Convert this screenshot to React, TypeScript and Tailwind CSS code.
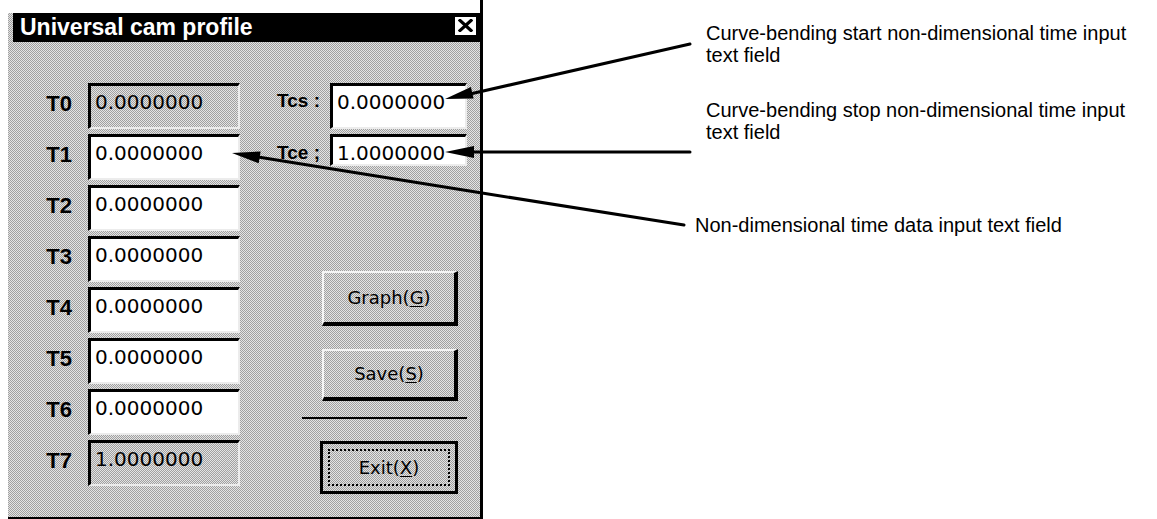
import React from "react";

const dither =
  "bg-[repeating-conic-gradient(#a0a0a0_0_25%,#e4e4e4_0_50%)] bg-[length:2px_2px]";

function Field({ value, gray, w, h }: { value: string; gray?: boolean; w: string; h: string }) {
  return (
    <div
      className={`${w} ${h} border-t-[3px] border-l-[3px] border-t-black border-l-black border-r-2 border-b-2 border-r-[#ececec] border-b-[#ececec] pl-[4px] pt-[4px] font-['DejaVu_Sans',sans-serif] text-[20px] leading-[24px] text-black ${
        gray ? dither : "bg-white"
      }`}
    >
      {value}
    </div>
  );
}

const rows: [string, string, boolean][] = [
  ["T0", "0.0000000", true],
  ["T1", "0.0000000", false],
  ["T2", "0.0000000", false],
  ["T3", "0.0000000", false],
  ["T4", "0.0000000", false],
  ["T5", "0.0000000", false],
  ["T6", "0.0000000", false],
  ["T7", "1.0000000", true],
];

export default function App() {
  return (
    <div className="relative flex h-[519px] w-[1157px] overflow-hidden bg-white font-['Liberation_Sans',Arial,sans-serif] text-black">
      {/* Dialog */}
      <div className="ml-2 flex h-full w-[475px] flex-col border-r-[3px] border-black">
        <div className="h-[13px] shrink-0" />
        <div className={`flex flex-1 flex-col border-b-2 border-black ${dither}`}>
          {/* Title bar */}
          <div className="ml-[5px] flex h-[29px] items-center bg-black pl-[7px] pr-[2px]">
            <span className="text-[23px] font-bold leading-none text-white">Universal cam profile</span>
            <div className="ml-auto mb-[4px] flex h-[22px] w-[25px] items-center justify-center border-2 border-black bg-white">
              <svg width="15" height="13" viewBox="0 0 15 13">
                <path d="M2 1.5 L13 11.5 M13 1.5 L2 11.5" stroke="#000" strokeWidth="3.2" strokeLinecap="square" />
              </svg>
            </div>
          </div>

          {/* Body */}
          <div className="flex pt-[41px]">
            {/* Left column */}
            <div className="flex flex-col gap-[5px]">
              {rows.map(([label, value, gray]) => (
                <div key={label} className="flex items-start">
                  <div className="w-[64px] pt-[9px] text-right text-[22px] font-bold leading-[24px]">{label}</div>
                  <div className="ml-[16px]">
                    <Field value={value} gray={gray} w="w-[152px]" h="h-[46px]" />
                  </div>
                </div>
              ))}
            </div>

            {/* Right column */}
            <div className="flex flex-col">
              <div className="flex items-start">
                <div className="w-[80px] pt-[6px] text-right text-[19px] font-bold leading-[24px]">Tcs :</div>
                <div className="ml-[10px]">
                  <Field value="0.0000000" w="w-[137px]" h="h-[46px]" />
                </div>
              </div>
              <div className="mt-[5px] flex items-start">
                <div className="w-[80px] pt-[7px] text-right text-[19px] font-bold leading-[24px]">Tce ;</div>
                <div className="ml-[10px]">
                  <Field value="1.0000000" w="w-[137px]" h="h-[32px]" />
                </div>
              </div>

              <div className="ml-[82px] mt-[105px] flex flex-col font-['DejaVu_Sans',sans-serif] text-[18px] leading-none">
                <div
                  className={`flex h-[55px] w-[136px] items-center justify-center border-l-2 border-t-2 border-l-[#f4f4f4] border-t-[#f4f4f4] border-b-[4px] border-r-[4px] border-b-black border-r-black ${dither}`}
                >
                  <span>
                    Graph(<span className="underline underline-offset-2">G</span>)
                  </span>
                </div>
                <div
                  className={`mt-[23px] flex h-[52px] w-[136px] items-center justify-center border-l-2 border-t-2 border-l-[#f4f4f4] border-t-[#f4f4f4] border-b-[4px] border-r-[4px] border-b-black border-r-black ${dither}`}
                >
                  <span>
                    Save(<span className="underline underline-offset-2">S</span>)
                  </span>
                </div>
                <div className="-ml-[20px] mt-[16px] h-[2px] w-[165px] bg-black" />
                <div
                  className={`-ml-[2px] mt-[22px] flex h-[53px] w-[138px] items-center justify-center border-[3px] border-black p-[5px] ${dither}`}
                >
                  <div className="flex h-full w-full items-center justify-center border-2 border-dotted border-black">
                    <span>
                      Exit(<span className="underline underline-offset-2">X</span>)
                    </span>
                  </div>
                </div>
              </div>
            </div>
          </div>
        </div>
      </div>

      {/* Annotations */}
      <div className="ml-[223px] flex flex-col text-[20px] leading-[22px]">
        <div className="mt-[22px]">
          Curve-bending start non-dimensional time input
          <br />
          text field
        </div>
        <div className="mt-[33px]">
          Curve-bending stop non-dimensional time input
          <br />
          text field
        </div>
        <div className="-ml-[11px] mt-[71px]">Non-dimensional time data input text field</div>
      </div>

      {/* Arrows */}
      <svg className="pointer-events-none absolute left-0 top-0" width="1157" height="519" viewBox="0 0 1157 519">
        <g stroke="#000" strokeWidth="3" fill="none" strokeLinecap="round">
          <path d="M690 44 L470 94" />
          <path d="M690 152 L470 152" />
          <path d="M684 225 L482 193 L258 157" />
        </g>
        <g fill="#000">
          <polygon points="445,99 473.6,98.5 470.9,86.9" />
          <polygon points="445,152 474,146 474,158" />
          <polygon points="232,153 260.6,151.5 258.7,163.3" />
        </g>
      </svg>
    </div>
  );
}
